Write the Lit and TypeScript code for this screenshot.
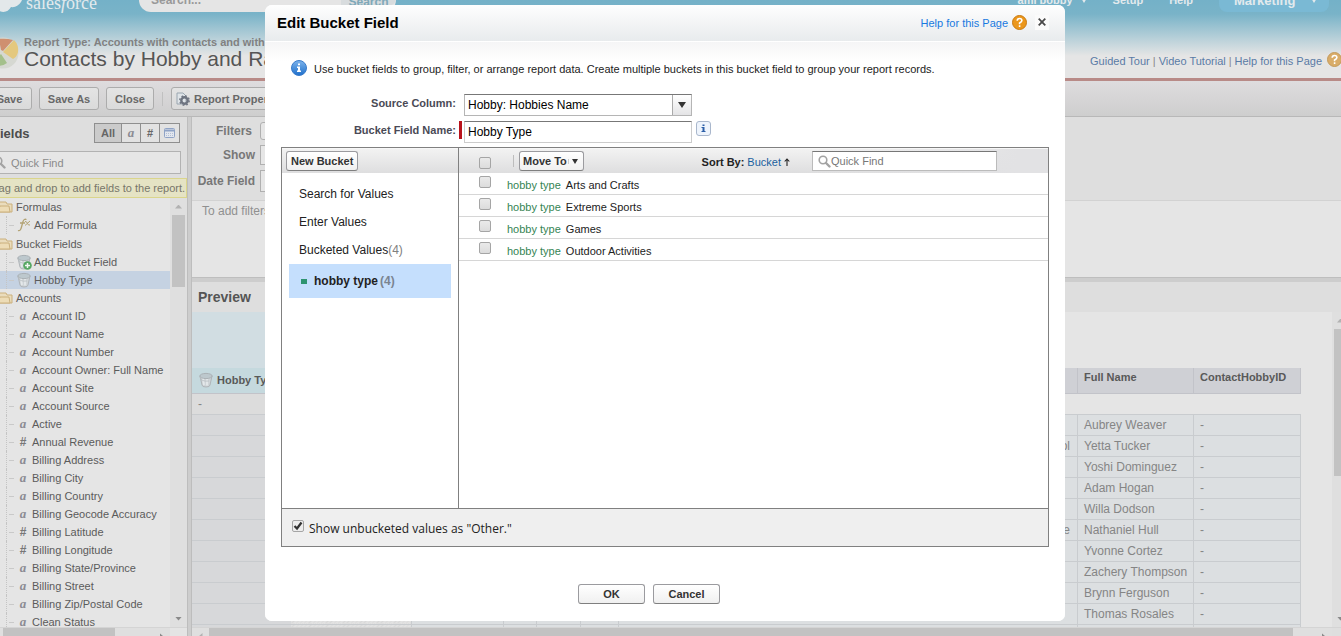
import { LitElement, html, css, svg, nothing } from "lit";
import { customElement, property } from "lit/decorators.js";
import { classMap } from "lit/directives/class-map.js";

type Kind = "text" | "number" | "formula" | "addBucket" | "bucket";
interface Field { kind: Kind; name: string; selected?: boolean }
interface Folder { name: string; fields: Field[] }

const t = (name: string): Field => ({ kind: "text", name });
const n = (name: string): Field => ({ kind: "number", name });

const FOLDERS: Folder[] = [
  { name: "Formulas", fields: [{ kind: "formula", name: "Add Formula" }] },
  {
    name: "Bucket Fields",
    fields: [
      { kind: "addBucket", name: "Add Bucket Field" },
      { kind: "bucket", name: "Hobby Type", selected: true },
    ],
  },
  {
    name: "Accounts",
    fields: [
      t("Account ID"), t("Account Name"), t("Account Number"),
      t("Account Owner: Full Name"), t("Account Site"), t("Account Source"),
      t("Active"), n("Annual Revenue"), t("Billing Address"), t("Billing City"),
      t("Billing Country"), t("Billing Geocode Accuracy"), n("Billing Latitude"),
      n("Billing Longitude"), t("Billing State/Province"), t("Billing Street"),
      t("Billing Zip/Postal Code"), t("Clean Status"),
    ],
  },
];

const CONTACTS = [
  { school: "", name: "Aubrey Weaver" },
  { school: "ol", name: "Yetta Tucker" },
  { school: "", name: "Yoshi Dominguez" },
  { school: "", name: "Adam Hogan" },
  { school: "", name: "Willa Dodson" },
  { school: "e", name: "Nathaniel Hull" },
  { school: "", name: "Yvonne Cortez" },
  { school: "", name: "Zachery Thompson" },
  { school: "", name: "Brynn Ferguson" },
  { school: "", name: "Thomas Rosales" },
];

const VALUES = ["Arts and Crafts", "Extreme Sports", "Games", "Outdoor Activities"];

const bucketShape = svg`
  <path d="M2 4 L4 13 Q4 15 8 15 Q12 15 12 13 L14 4 Z" fill="#cfd4d7" stroke="#b0b5b9" stroke-width="1"/>
  <path d="M5 6 L6 13 M9 6.5 V13.5" stroke="#e4e8ea" stroke-width="1.8" fill="none"/>
  <ellipse cx="8" cy="4" rx="6.2" ry="2.6" fill="#bdc8cd" stroke="#aab1b5"/>
  <path d="M2 5 Q3 10 11 9" fill="none" stroke="#b8bec1" stroke-width=".8"/>`;

const icons = {
  folder: html`<svg width="16" height="12" viewBox="0 0 16 12" aria-hidden="true">
    <path d="M1 11 V2 Q1 1 2 1 H9 L10 3 H15 V11 Z" fill="#eadcbc" stroke="#cbb07c"/>
    <path d="M1 11 L3 5 H12 L13 11 Z" fill="#eddcb6" stroke="#cbb07c"/></svg>`,
  bucket: html`<svg width="16" height="16" viewBox="0 0 16 16" aria-hidden="true">${bucketShape}</svg>`,
  addBucket: html`<svg width="16" height="16" viewBox="0 0 16 16" aria-hidden="true">${bucketShape}
    <circle cx="11.500" cy="11.500" r="4.300" fill="#57a763"/>
    <path d="M11.500 9 V14 M9 11.500 H14" stroke="#f2f7f2" stroke-width="1.500"/></svg>`,
  formula: html`<svg width="16" height="14" viewBox="0 0 16 14" aria-hidden="true">
    <path d="M2 12.500 Q4.500 13.500 5.500 9 L7 3.500 Q8 .5 10.500 1.500 M4 5 H9" fill="none" stroke="#b3a374" stroke-width="1.300"/>
    <path d="M9 3.500 Q10.500 3 11.500 5.500 Q12 7.500 14 7 M14 3 L9 7.500" fill="none" stroke="#b3a374"/></svg>`,
  magnifier: html`<svg width="13" height="13" viewBox="0 0 13 13" aria-hidden="true">
    <circle cx="5" cy="5" r="3.800" fill="none" stroke="#a3a3a3" stroke-width="1.600"/>
    <path d="M8 8 L11.500 11.500" stroke="#a3a3a3" stroke-width="2.400" stroke-linecap="round"/></svg>`,
  calendar: html`<svg width="12" height="11" viewBox="0 0 12 11" aria-hidden="true">
    <rect x=".5" y=".5" width="10" height="9" rx="1" fill="#e3e7ee" stroke="#8fa3c6"/>
    <path d="M1 2.500 H10" stroke="#8fa3c6" stroke-width="2"/>
    <path d="M2 5.500 H9 M2 7.500 H9" stroke="#b4c0d6" stroke-dasharray="1 1"/></svg>`,
  properties: html`<svg width="14" height="14" viewBox="0 0 14 14" aria-hidden="true">
    <path d="M1 1 H7 L10 4 V12 H1 Z" fill="#dfe4e8" stroke="#9aa6b0"/>
    <circle cx="8.500" cy="8.500" r="3.200" fill="none" stroke="#6e7480" stroke-width="2.400"/>
    <circle cx="8.500" cy="8.500" r="4.700" fill="none" stroke="#6e7480" stroke-width="1.400" stroke-dasharray="1.800 1.890"/></svg>`,
  pie: html`<svg width="34" height="34" viewBox="0 0 34 34" aria-hidden="true">
    <circle cx="17" cy="17" r="15.500" fill="#d6d8d2"/>
    <path d="M15 14 L13 3 Q20 2 27 4 L17 15 Z" fill="#cf9070"/>
    <path d="M17 16 L28 4 Q33 9 32 16 Q31 21 27 23 Z" fill="#e4c87e"/>
    <path d="M15 18 L21 27 A14 14 0 0 1 6 28 Z" fill="#a4c08b"/></svg>`,
  cloud: html`<svg width="40" height="30" viewBox="0 0 40 30" aria-hidden="true">
    <path d="M2 4 H35 Q39 10 35 17 Q31 23 25 22 Q21 29 13 26 Q3 30 2 18 Z" fill="#e3e8ea"/></svg>`,
  info: html`<svg width="16" height="16" viewBox="0 0 16 16" aria-hidden="true">
    <defs><linearGradient id="ball" x1="0" y1="0" x2="0" y2="1"><stop offset="0" stop-color="#7db4ec"/><stop offset="1" stop-color="#1f6fcb"/></linearGradient></defs>
    <circle cx="8" cy="8" r="7.500" fill="url(#ball)" stroke="#3a7ccb"/>
    <path d="M7 3.500 H9 V5.200 H7 Z M6 6.500 H9 V10.500 H10 V12 H6 V10.500 H7 V8 H6 Z" fill="#fff"/></svg>`,
  infoBox: html`<svg width="15" height="15" viewBox="0 0 15 15" aria-hidden="true">
    <rect x=".5" y=".5" width="14" height="14" rx="2.500" fill="#eef4fc" stroke="#a9b7cc"/>
    <path d="M6.500 3.500 H8.500 V5 H6.500 Z M5.500 6 H8.500 V10 H9.500 V11 H5.500 V10 H6.500 V7 H5.500 Z" fill="#2c5fa8"/></svg>`,
  close: html`<svg width="8" height="8" viewBox="0 0 8 8" aria-hidden="true">
    <path d="M.7 .7 L7.300 7.300 M7.300 .7 L.7 7.300" stroke="#4a4a4a" stroke-width="1.800"/></svg>`,
  down: html`<svg width="8" height="6" viewBox="0 0 8 6" aria-hidden="true"><path d="M0 0 H8 L4 6 Z" fill="currentColor"/></svg>`,
  smallDown: html`<svg width="6" height="5" viewBox="0 0 6 5" aria-hidden="true"><path d="M0 0 H6 L3 5 Z" fill="currentColor"/></svg>`,
  up: html`<svg width="6" height="8" viewBox="0 0 6 8" aria-hidden="true"><path d="M3 8 V1 M.7 3.500 L3 1 L5.300 3.500" fill="none" stroke="#222" stroke-width="1.100"/></svg>`,
};

const help = (ball: string, rim: string) => html`<svg width="15" height="15" viewBox="0 0 15 15" aria-hidden="true">
  <circle cx="7.500" cy="7.500" r="7" fill=${ball} stroke=${rim}/>
  <path d="M5.200 5.800 Q5.200 3.500 7.500 3.500 Q9.900 3.500 9.900 5.600 Q9.900 6.900 7.600 8 V9.200 M7.600 10.300 V12" fill="none" stroke="#fff" stroke-width="1.600"/></svg>`;

const base = css`
  * { box-sizing: border-box; }
  button, input, select { font: inherit; color: inherit; margin: 0; }
  a { text-decoration: none; }
  svg { display: block; flex: none; }
`;

@customElement("scroll-track")
class ScrollTrack extends LitElement {
  @property({ type: Boolean, reflect: true }) horizontal = false;
  static styles = css`
    :host { display: flex; flex-direction: column; align-items: center; background: #dfdfdf; color: #8a8a8a; overflow: hidden; }
    :host([horizontal]) { flex-direction: row; }
    .arrow { flex: none; width: 17px; height: 17px; display: flex; align-items: center; justify-content: center; }
    .tip { width: 7px; height: 4px; background: currentColor; }
    .first { clip-path: polygon(50% 0, 100% 100%, 0 100%); color: #b2b2b2; }
    .last { clip-path: polygon(0 0, 100% 0, 50% 100%); }
    :host([horizontal]) .tip { width: 4px; height: 7px; }
    :host([horizontal]) .first { clip-path: polygon(0 50%, 100% 0, 100% 100%); }
    :host([horizontal]) .last { clip-path: polygon(0 0, 100% 50%, 0 100%); }
    .lane { flex: 1; min-height: 0; min-width: 0; width: 13px; }
    .thumb { background: #c2c2c2; width: 100%; height: var(--thumb); }
    :host([horizontal]) .lane { width: auto; height: 17px; }
    :host([horizontal]) .thumb { height: 100%; width: var(--thumb); }
  `;
  render() {
    return html`<div class="arrow"><div class="tip first"></div></div>
      <div class="lane"><div class="thumb"></div></div>
      <div class="arrow"><div class="tip last"></div></div>`;
  }
}

@customElement("field-tree")
class FieldTree extends LitElement {
  static styles = [base, css`
    :host { display: flex; flex-direction: column; background: #dedede; color: #5b5b5b; min-width: 0; min-height: 0; }
    .head { display: flex; align-items: center; justify-content: space-between; padding: 6px 7px 0 6px; height: 26px; }
    h2 { margin: 0; font-size: 13px; color: #4c4c4c; }
    .kinds { display: flex; border: 1px solid #8f8f8f; height: 20px; }
    .kinds button { border: 0; border-left: 1px solid #8f8f8f; background: #e2e2e2; width: 19px; padding: 0; font-weight: bold; color: #666; display: flex; align-items: center; justify-content: center; }
    .kinds button.all { width: 26px; border-left: 0; background: #cbcbcb; }
    .kinds button.cal { width: 20px; }
    .a { font: italic bold 13px "Liberation Serif", serif; color: #8b8b93; }
    .find { display: flex; align-items: center; gap: 5px; margin: 8px 6px 4px 0; height: 23px; border: 1px solid #b2b2b2; background: #e6e6e6; padding-left: 6px; }
    .find input { flex: 1; min-width: 0; border: 0; background: none; padding: 0; outline: 0; }
    .find input::placeholder { color: #8a8a8a; }
    .hint { height: 20px; background: #e5e3c4; border: 1px solid #dad58c; padding: 0 3px 0 0; line-height: 18px; text-align: right; white-space: nowrap; color: #77766a; padding-right: 4px; }
    .body { flex: 1; min-height: 0; display: flex; background: #e5e5e5; }
    .tree { flex: 1; min-width: 0; overflow: hidden; }
    scroll-track.v { width: 17px; --thumb: 72px; }
    ul { list-style: none; margin: 0; padding: 0; }
    .row { height: 18px; display: flex; align-items: center; white-space: nowrap; }
    .folder { padding-left: 11px; gap: 3px; }
    .formulas { margin-bottom: 1px; }
    .field::before { content: ""; width: 7px; height: 18px; margin-left: 20px; border-left: 1px dotted #c4c4c4; background: linear-gradient(#c9c9c9, #c9c9c9) no-repeat 2px 9px / 5px 1px; }
    .glyph { width: 14px; display: flex; justify-content: center; font-weight: bold; color: #777; font-size: 12px; }
    .field { gap: 2px; }
    .wide .glyph { width: 16px; }
    .sel { background: #c5d2e2; }
    .foot { display: flex; height: 9px; overflow: hidden; background: #dfdfdf; border-top: 1px solid #d4d4d4; }
    scroll-track.h { flex: 1; height: 17px; --thumb: 112px; }
    .corner { width: 17px; background: #e4e4e4; }
  `];
  glyph(kind: Kind) {
    if (kind === "text") return html`<span class="a">a</span>`;
    if (kind === "number") return "#";
    return icons[kind];
  }
  render() {
    return html`
      <div class="head"><h2>Fields</h2>
        <div class="kinds">
          <button class="all">All</button><button aria-label="Text fields"><span class="a">a</span></button><button>#</button><button class="cal" aria-label="Date fields">${icons.calendar}</button>
        </div>
      </div>
      <label class="find">${icons.magnifier}<input type="text" placeholder="Quick Find" aria-label="Quick Find fields"></label>
      <div class="hint">Drag and drop to add fields to the report.</div>
      <div class="body">
        <ul class="tree">
          ${FOLDERS.map((f) => html`<li>
            <div class="row folder">${icons.folder}<span>${f.name}</span></div>
            <ul class=${classMap({ formulas: f.name === "Formulas" })}>
              ${f.fields.map((x) => html`<li class=${classMap({ row: true, field: true, sel: !!x.selected, wide: x.kind !== "text" && x.kind !== "number" })}>
                <span class="glyph">${this.glyph(x.kind)}</span><span>${x.name}</span></li>`)}
            </ul></li>`)}
        </ul>
        <scroll-track class="v"></scroll-track>
      </div>
      <div class="foot"><scroll-track class="h" horizontal></scroll-track><div class="corner"></div></div>`;
  }
}

@customElement("report-preview")
class ReportPreview extends LitElement {
  static styles = [base, css`
    :host { display: flex; flex-direction: column; min-width: 0; min-height: 0; background: #dedede; }
    .filters { height: 160px; display: flex; flex-direction: column; background: #dedede; }
    .controls { height: 83px; display: grid; grid-template-columns: 63px 200px; grid-template-rows: 18px 20px 22px; row-gap: 5px; column-gap: 5px; padding-top: 5px; font-size: 12px; font-weight: bold; color: #777; align-items: center; justify-items: end; }
    .controls > :nth-child(even) { justify-self: stretch; height: 100%; border: 1px solid #b0b0b0; background: #e6e6e6; padding: 0; }
    .controls button { border-radius: 3px; }
    .controls .first { padding-right: 3px; }
    .tip { flex: 1; background: #e5e5e5; border-top: 1px solid #d2d2d2; padding: 3px 10px; font-size: 12px; line-height: 14px; color: #909090; }
    .split { height: 5px; background: #cdcdcd; border-top: 1px solid #bebebe; }
    h2 { margin: 0; font-size: 14px; line-height: 30px; padding-left: 6px; color: #555; }
    .body { flex: 1; min-height: 0; display: flex; background: #e5e5e5; }
    .sheet { flex: 1; min-width: 0; overflow: hidden; padding-right: 31px; }
    table { width: 100%; border-collapse: collapse; table-layout: fixed; font-size: 12px; color: #858585; }
    th, td { height: 21px; padding: 0 4px 0 6px; text-align: left; white-space: nowrap; border-right: 1px solid #c9cccf; border-bottom: 1px solid #c9cccf; background: #dcdfe1; overflow: hidden; }
    .zone th { height: 56px; background: #e5e5e5; border: 0; }
    .zone th:first-child { background: #d1dde2; }
    .names th { height: 25px; font-size: 11px; color: #595959; background: #cfd0d5; border-color: #c2c3c9; padding-bottom: 7px; }
    .names th:first-child { background: #c5d9de; padding-bottom: 1px; }
    .name { display: flex; align-items: center; gap: 3px; }
    .group td { background: #e5e5e5; border-right: 0; height: 21px; }
    .group td:first-child { background: #dcdcdc; }
    tbody td:first-child { background: #d7d8da; border-right: 0; }
    td.pick { background: repeating-linear-gradient(135deg, #e2e2e2 0 2px, #d9d9d9 2px 3px); }
    td.tail { text-align: right; padding-right: 7px; }
    scroll-track.v { width: 17px; margin-right: -8px; --thumb: 147px; }
    .foot { height: 9px; overflow: hidden; border-top: 1px solid #d4d4d4; padding-right: 9px; }
    scroll-track.h { height: 17px; --thumb: 98%; }
  `];
  render() {
    const gaps = [0, 1, 2, 3, 4];
    return html`
      <section class="filters">
        <div class="controls">
          <span class="first">Filters</span><button aria-label="Add filter"></button>
          <label for="show">Show</label><select id="show"></select>
          <label for="date">Date Field</label><select id="date"></select>
        </div>
        <div class="tip">To add filters</div>
      </section>
      <div class="split"></div>
      <h2>Preview</h2>
      <div class="body">
        <div class="sheet"><table>
          <colgroup><col width="99"><col width="120"><col width="92"><col width="33"><col width="44"><col width="38"><col><col width="116"><col width="107"></colgroup>
          <thead>
            <tr class="zone"><th></th><th colspan="8"></th></tr>
            <tr class="names"><th><span class="name">${icons.bucket}Hobby Type</span></th>${gaps.map(() => html`<th></th>`)}<th></th><th>Full Name</th><th>ContactHobbyID</th></tr>
          </thead>
          <tbody>
            <tr class="group"><td>-</td><td colspan="8"></td></tr>
            ${[...CONTACTS, null].map((c) => html`<tr><td></td>${gaps.map((i) => html`<td class=${i === 0 ? "pick" : ""}></td>`)}<td class="tail">${c?.school ?? nothing}</td><td>${c?.name ?? nothing}</td><td>${c ? "-" : nothing}</td></tr>`)}
          </tbody>
        </table></div>
        <scroll-track class="v"></scroll-track>
      </div>
      <div class="foot"><scroll-track class="h" horizontal></scroll-track></div>`;
  }
}

@customElement("bucket-dialog")
class BucketDialog extends LitElement {
  static styles = [base, css`
    :host { display: flex; flex-direction: column; width: 800px; max-width: 100%; background: #fff; border-radius: 7px; overflow: hidden; color: #222; }
    header { height: 37px; display: flex; align-items: center; padding: 0 16px 2px 12px; background: linear-gradient(#fefefe, #e8ebed); border-bottom: 1px solid #fff; }
    h1 { margin: 0; flex: 1; font-size: 15px; color: #000; }
    a { color: #1879e0; }
    header a { display: flex; align-items: center; gap: 4px; }
    header a span { padding-top: 2px; }
    .x { margin-left: 8px; width: 14px; height: 15px; border: 0; padding: 0; background: #fbfbfb; display: flex; align-items: center; justify-content: center; }
    main { padding: 18px 16px 17px; display: flex; flex-direction: column; background: linear-gradient(#f5f5f6, #fff 20px); }
    .note { margin: 0 0 18px 10px; display: flex; align-items: center; gap: 7px; height: 16px; }
    .note span { padding-top: 2px; }
    .form { display: grid; grid-template-columns: 175px 228px auto; grid-auto-rows: 22px; column-gap: 8px; row-gap: 5px; font-weight: bold; color: #4a4a56; align-items: center; margin-bottom: 4px; }
    .form label { text-align: right; padding-bottom: 4px; }
    .form input, .form select { font-size: 12px; color: #000; font-weight: normal; }
    .combo { display: grid; grid-template-columns: 1fr 19px; border: 1px solid #b5b5b5; border-top-color: #777; height: 22px; }
    .combo select { grid-area: 1 / 1 / 2 / 3; appearance: none; border: 0; background: #fff; padding: 0 3px; outline: 0; border-radius: 0; }
    .combo span { grid-area: 1 / 2; z-index: 1; pointer-events: none; border-left: 1px solid #aaa; background: linear-gradient(#fff, #e4e4e6); display: flex; align-items: center; justify-content: center; color: #333; }
    .required { height: 22px; display: flex; gap: 2px; margin-left: -5px; }
    .required::before { content: ""; width: 3px; height: 18px; background: #b8121b; }
    .required input { flex: 1; min-width: 0; border: 1px solid #ccc; border-top-color: #777; padding: 0 3px; outline: 0; }
    .tip { border: 0; background: none; padding: 0; justify-self: start; margin: 0 0 8px -4px; }
    .panel { border: 1px solid #808080; display: grid; grid-template-columns: 177px 1fr; }
    .left { border-right: 1px solid #808080; height: 360px; }
    .bar { display: flex; align-items: center; height: 25px; background: linear-gradient(#f2f2f2, #dededf); padding: 0 4px; border-top: 1px solid #f7f7f7; }
    .right .bar { background: linear-gradient(90deg, #0000 60%, #e2e2e4 95%), linear-gradient(#f2f2f2, #dededf); padding-left: 20px; }
    .btn { height: 20px; border: 1px solid #9b9b9f; border-bottom-color: #7f7f7f; border-radius: 3px; background: linear-gradient(#fff, #f0f0f0); font-weight: bold; color: #333; padding: 0 4px; white-space: nowrap; display: flex; align-items: center; justify-content: center; }
    .list { list-style: none; margin: 7px 7px 0; padding: 0; font-size: 12px; }
    .list li { height: 28px; display: flex; align-items: center; padding-left: 10px; }
    .count { color: #808080; }
    .list li.on { height: 34px; background: #c5dffd; font-weight: bold; gap: 2px; padding-left: 12px; }
    .on i { width: 6px; height: 5px; background: #2e9470; margin-right: 5px; }
    .on .count { color: #7a8490; }
    input[type="checkbox"] { appearance: none; width: 12px; height: 12px; flex: none; border: 1px solid #a5a5a5; border-radius: 2px; background: linear-gradient(#eaeaea, #dcdcdc); }
    input[type="checkbox"]:checked { background: #ededed url('data:image/svg+xml,<svg xmlns="http://www.w3.org/2000/svg" viewBox="0 0 10 10"><path d="M1.500 5 L4 7.500 L8.500 1.500" fill="none" stroke="%23333" stroke-width="2.200"/></svg>'); }
    .bar input[type="checkbox"] { margin-top: 3px; }
    .rule { width: 1px; height: 12px; background: #bdbdbd; margin: 0 5px 0 22px; }
    .move { gap: 5px; padding: 0 5px 0 3px; }
    .move span { border-left: 1px solid #ccc; padding-left: 3px; margin-left: -4px; }
    .sort { display: flex; align-items: center; gap: 3px; margin-left: auto; padding: 2px 22px 0 0; }
    .sort a { color: #1a5f9e; }
    .find { display: flex; align-items: center; width: 185px; height: 20px; border: 1px solid #bbb; border-top-color: #777; background: #fff; padding-left: 5px; margin-right: 47px; }
    .find input { flex: 1; min-width: 0; border: 0; padding: 0; outline: 0; background: none; }
    .find input::placeholder { color: #777; }
    .value { height: 22px; display: flex; align-items: center; padding-left: 20px; border-bottom: 1px solid #d6d6d6; }
    .value input { margin-bottom: 4px; }
    .value label { display: flex; gap: 5px; padding: 2px 0 0 16px; }
    .value .tag { color: #348453; }
    .rest { grid-column: 1 / -1; height: 38px; border-top: 1px solid #808080; background: #efefef; display: flex; align-items: center; gap: 5px; padding-left: 10px; font: 12px "Open Sans", sans-serif; }
    .rest input { margin-bottom: 3px; }
    .rest label { padding-top: 1px; }
    .actions { display: flex; justify-content: center; gap: 8px; margin: 37px 32px 0 0; }
    .actions .btn { width: 67px; }
  `];
  render() {
    return html`
      <header><h1>Edit Bucket Field</h1>
        <a href="#help"><span>Help for this Page</span>${help("#eb971b", "#c87a12")}</a>
        <button class="x" aria-label="Close">${icons.close}</button></header>
      <main>
        <p class="note">${icons.info}<span>Use bucket fields to group, filter, or arrange report data. Create multiple buckets in this bucket field to group your report records.</span></p>
        <div class="form">
          <label for="source">Source Column:</label>
          <div class="combo"><select id="source"><option>Hobby: Hobbies Name</option></select><span>${icons.down}</span></div><span></span>
          <label for="name">Bucket Field Name:</label>
          <div class="required"><input id="name" type="text" .value=${"Hobby Type"}></div>
          <button class="tip" aria-label="About bucket field names">${icons.infoBox}</button>
        </div>
        <div class="panel">
          <section class="left">
            <div class="bar"><button class="btn">New Bucket</button></div>
            <ul class="list">
              <li>Search for Values</li><li>Enter Values</li>
              <li>Bucketed Values<span class="count">(4)</span></li>
              <li class="on"><i></i>hobby type<span class="count">(4)</span></li>
            </ul>
          </section>
          <section class="right">
            <div class="bar"><input type="checkbox" aria-label="Select all values"><div class="rule"></div>
              <button class="btn move">Move To<span>${icons.smallDown}</span></button>
              <div class="sort"><b>Sort By:</b><a href="#sort">Bucket</a>${icons.up}</div>
              <label class="find">${icons.magnifier}<input type="text" placeholder="Quick Find" aria-label="Quick Find values"></label></div>
            ${VALUES.map((v, i) => html`<div class="value"><input type="checkbox" id="v${i}"><label for="v${i}"><span class="tag">hobby type</span><span>${v}</span></label></div>`)}
          </section>
          <div class="rest"><input type="checkbox" id="other" checked><label for="other">Show unbucketed values as "Other."</label></div>
        </div>
        <div class="actions"><button class="btn">OK</button><button class="btn">Cancel</button></div>
      </main>`;
  }
}

@customElement("app-root")
class AppRoot extends LitElement {
  static styles = [base, css`
    :host { display: block; position: relative; height: 100vh; overflow: hidden; font: 11px "Liberation Sans", Arial, sans-serif; background: #e5e5e5; }
    .page { margin-left: -14px; height: 100%; display: flex; flex-direction: column; }
    .top { height: 78px; overflow: hidden; background: linear-gradient(#74b1c8, #79b3c8 14px, #e5e5e5 56px); }
    .nav { display: flex; align-items: center; height: 24px; margin-top: -12px; padding: 0 12px 0 0; font-weight: bold; color: #e3eaed; }
    .logo { display: flex; align-items: center; width: 153px; font: 18px "Liberation Serif", serif; }
    .logo span { padding-top: 7px; }
    .search { display: flex; height: 24px; border-radius: 12px; background: #e5e5e5; padding-left: 12px; }
    .search input { width: 190px; border: 0; background: none; padding: 0; font-size: 12px; outline: 0; }
    .search input::placeholder { color: #999; }
    .search button { height: 17px; margin-top: 1px; border: 0; border-radius: 0 8px 8px 0; background: #d8dcde; color: #7fa9b9; width: 55px; font-size: 12px; font-weight: bold; padding: 6px 0 0; }
    .menu { margin-left: auto; display: flex; align-items: center; gap: 26px; }
    .menu a { color: inherit; display: flex; align-items: center; gap: 8px; }
    .pill { height: 24px; border-radius: 8px; background: #7ab9d4; padding: 0 12px 0 15px; font-size: 13px; width: 110px; justify-content: space-between; white-space: nowrap; }
    .title { display: flex; align-items: center; height: 66px; padding: 15px 0 0; gap: 4px; }
    .title h1 { margin: 0; font-size: 21px; line-height: 22px; font-weight: normal; color: #555; white-space: nowrap; }
    .title p { margin: 0; line-height: 12px; font-weight: bold; color: #818181; white-space: nowrap; }
    .links { margin-left: auto; display: flex; align-items: center; gap: 3px; color: #888; padding-top: 17px; }
    .links a { color: #5a7ba6; }
    .links svg { margin: -4px -1px 0 2px; }
    .tools { height: 39px; flex: none; border-top: 3px solid #b88a87; border-bottom: 1px solid #b8b8b8; background: linear-gradient(#dedcde, #cecece); display: flex; align-items: center; gap: 7px; padding: 0 1px; }
    .tools button { height: 23px; border: 1px solid #acacac; border-radius: 3px; background: linear-gradient(#e4e4e4, #dadada); font-weight: bold; color: #686868; display: flex; align-items: center; justify-content: center; gap: 4px; white-space: nowrap; padding: 0 4px; }
    .save { width: 45px; } .saveas { width: 60px; } .close { width: 48px; }
    .tools i { width: 1px; height: 14px; background: #c0c0c0; margin: 0 1px; }
    .work { flex: 1; min-height: 0; display: grid; grid-template-columns: 201px 5px 1fr; grid-template-rows: 100%; }
    .split { background: #cdcdcd; border-left: 1px solid #bdbdbd; border-right: 1px solid #bdbdbd; display: flex; align-items: center; }
    .overlay { position: absolute; inset: 5px 11px 0 0; display: flex; justify-content: center; align-items: flex-start; }
  `];
  render() {
    return html`
      <div class="page">
        <div class="top">
          <div class="nav">
            <div class="logo">${icons.cloud}<span>sales<em>f</em>orce</span></div>
            <div class="search"><input type="text" placeholder="Search..." aria-label="Search"><button>Search</button></div>
            <div class="menu"><a href="#user">ami bobby ${icons.smallDown}</a><a href="#setup">Setup</a><a href="#helpmenu">Help</a><a class="pill" href="#app">Marketing ${icons.smallDown}</a></div>
          </div>
          <div class="title">${icons.pie}
            <div><p>Report Type: Accounts with contacts and with hobbies</p><h1>Contacts by Hobby and Rating</h1></div>
            <div class="links"><a href="#tour">Guided Tour</a>|<a href="#video">Video Tutorial</a>|<a href="#pagehelp">Help for this Page</a>${help("#d9ac68", "#c39a5c")}</div>
          </div>
        </div>
        <div class="tools"><button class="save">Save</button><button class="saveas">Save As</button><button class="close">Close</button><i></i><button>${icons.properties}Report Properties</button></div>
        <div class="work"><field-tree></field-tree><div class="split"></div><report-preview></report-preview></div>
      </div>
      <div class="overlay"><bucket-dialog role="dialog" aria-label="Edit Bucket Field"></bucket-dialog></div>`;
  }
}
